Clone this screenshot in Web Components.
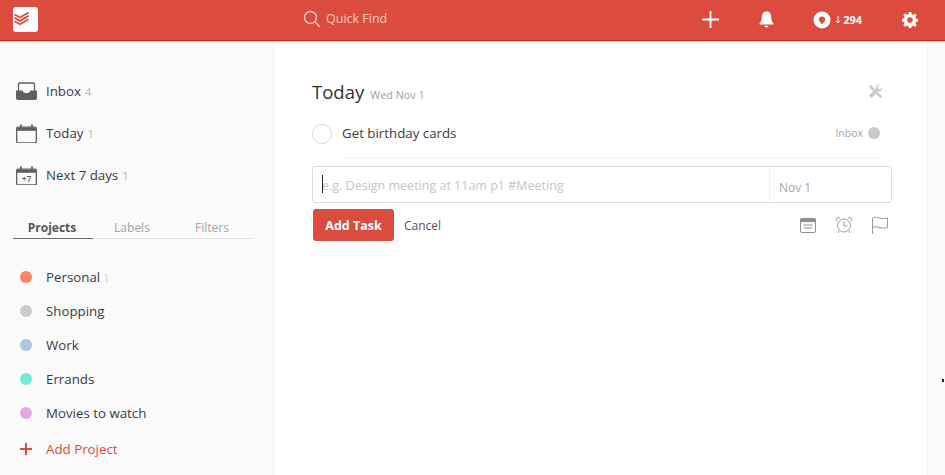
<!DOCTYPE html>
<html>
<head>
<meta charset="utf-8">
<title>Today</title>
<style>
  html, body { margin: 0; height: 100%; overflow: hidden; }
  body { font-family: "Open Sans", "Noto Sans", sans-serif; color: #333; }
  td-app { width: 945px; height: 475px; }
</style>
</head>
<body>
<td-app>
  <td-topbar slot="top"></td-topbar>
  <td-sidebar slot="side">
    <td-nav icon="inbox" count="4">Inbox</td-nav>
    <td-nav icon="today" count="1">Today</td-nav>
    <td-nav icon="week" count="1">Next 7 days</td-nav>
    <td-tabs></td-tabs>
    <td-project color="#ff8167" count="1">Personal</td-project>
    <td-project color="#cccccc">Shopping</td-project>
    <td-project color="#a8c8e4">Work</td-project>
    <td-project color="#74e8d4">Errands</td-project>
    <td-project color="#e3a8e4">Movies to watch</td-project>
    <td-add-project></td-add-project>
  </td-sidebar>
  <td-main slot="main">
    <td-task project="Inbox">Get birthday cards</td-task>
    <td-editor></td-editor>
  </td-main>
</td-app>

<script>
class TdApp extends HTMLElement {
  constructor() {
    super();
    this.attachShadow({ mode: 'open' }).innerHTML = `
      <style>
        :host { display: grid; grid-template-rows: 41px 1fr; grid-template-columns: 274px 1fr 18px; background: #fff; }
        ::slotted([slot=top]) { grid-column: 1 / 4; }
        .right { background: #fafafa; border-left: 1px solid #f1f1f1; position: relative; }
        .mark { position: absolute; right: 1px; top: 338px; width: 2px; height: 3px; background: #223; }
      </style>
      <slot name="top"></slot>
      <slot name="side"></slot>
      <slot name="main"></slot>
      <div class="right"><div class="mark"></div></div>`;
  }
}

class TdTopbar extends HTMLElement {
  constructor() {
    super();
    this.attachShadow({ mode: 'open' }).innerHTML = `
      <style>
        :host { display: flex; align-items: center; height: 40px; background: #db4c3f; border-bottom: 1px solid #c9260f; box-shadow: 0 1px 3px rgba(0,0,0,.08); color: #fff; position: relative; z-index: 1; }
        svg { display: block; flex: none; }
        .logo { margin-left: 13px; margin-bottom: 1px; }
        .search { display: flex; align-items: center; gap: 5px; margin-left: 265px; color: #f7c9c4; font-size: 12.500px; line-height: 18px; margin-bottom: 2px; }
        .right { display: flex; align-items: center; margin-left: auto; margin-bottom: 1px; }
        .plus { margin-right: 40px; }
        .bell { margin-right: 39px; }
        .karma { display: flex; align-items: center; margin-right: 40px; font-size: 11px; font-weight: 700; }
        .karma .arrow { margin: 0 2px 0 4px; }
        .gear { margin-right: 27px; }
      </style>
      <svg class="logo" width="25" height="25" viewBox="0 0 25 25">
        <rect width="25" height="25" rx="3" fill="#fff"/>
        <path d="M1.500 7.500 7 10.500 15.500 5.500M1.500 10.900 7 13.900 15.500 8.900M1.500 14.300 7 17.300 15.500 12.300" fill="none" stroke="#db4c3f" stroke-width="1.800"/>
      </svg>
      <div class="search">
        <svg width="18" height="18" viewBox="0 0 18 18" fill="none" stroke="#f7c9c4" stroke-width="1.400"><circle cx="7.500" cy="7.500" r="6"/><path d="M11.800 11.800 L17 17"/></svg>
        <span>Quick Find</span>
      </div>
      <div class="right">
        <svg class="plus" width="17" height="17" viewBox="0 0 17 17"><path d="M8.500 0v17M0 8.500h17" stroke="#fff" stroke-width="1.800"/></svg>
        <svg class="bell" width="15" height="17" viewBox="0 0 15 17" fill="#fff"><path d="M7.500 0.500c3.400 0 4.700 2.600 4.700 5.600 0 3.400 1 5 2.300 6.400v1h-14v-1c1.300-1.400 2.300-3 2.300-6.400 0-3 1.300-5.600 4.700-5.600z"/><path d="M5.500 14.800h4c0 1-.9 1.700-2 1.700s-2-.7-2-1.700z"/></svg>
        <div class="karma">
          <svg width="18" height="18" viewBox="0 0 18 18"><circle cx="9" cy="9" r="8.500" fill="#fff"/><path d="M9 5.500c2 0 3.200 1.200 3.200 2.800 0 1.800-1.800 3.300-3.200 5-1.400-1.700-3.200-3.200-3.200-5C5.800 6.700 7 5.500 9 5.500z" fill="#db4c3f"/></svg>
          <svg class="arrow" width="6" height="8" viewBox="0 0 6 8" fill="none" stroke="#fff"><path d="M3 0v7M.8 4.800 3 7l2.200-2.200"/></svg>
          <span>294</span>
        </div>
        <svg class="gear" width="16" height="16" viewBox="0 0 16 16"><path fill="#fff" fill-rule="evenodd" d="M6.700 0h2.600l.4 2.200 1.300.6 1.900-1.300 1.800 1.800-1.300 1.900.6 1.300 2 .4v2.600l-2 .4-.6 1.300 1.300 1.900-1.800 1.800-1.900-1.300-1.300.6-.4 2H6.700l-.4-2-1.300-.6-1.900 1.300-1.800-1.800 1.300-1.900-.6-1.300-2-.4V6.700l2-.4.6-1.300L1.300 3.100l1.800-1.800L5 2.800l1.300-.6zM8 5.200a2.800 2.800 0 1 0 0 5.600 2.800 2.800 0 0 0 0-5.600z"/></svg>
      </div>`;
  }
}

class TdSidebar extends HTMLElement {
  constructor() {
    super();
    this.attachShadow({ mode: 'open' }).innerHTML = `
      <style>
        :host { display: flex; flex-direction: column; background: #fafafa; border-right: 1px solid #f1f1f1; padding-top: 29px; height: 434px; box-sizing: border-box; overflow: hidden; }
      </style>
      <slot></slot>`;
  }
}

const NAV_ICONS = {
  inbox: `<path d="M2.500 10V2a1 1 0 0 1 1-1h14a1 1 0 0 1 1 1v8" fill="none" stroke="#5f5f5f" stroke-width="1.300"/><path d="M0 9h6.500c.5 1.800 2 2.800 4 2.800s3.500-1 4-2.800H21v7.500a2 2 0 0 1-2 2H2a2 2 0 0 1-2-2z" transform="translate(0 -.5)" fill="#5f5f5f"/>`,
  today: `<rect x=".7" y="3.200" width="19.600" height="15.600" rx="1.300" fill="none" stroke="#5f5f5f" stroke-width="1.300"/><path d="M.7 3.500h19.600v3.300H.7z" fill="#5f5f5f"/><path d="M5 .5v3M16 .5v3" stroke="#5f5f5f" stroke-width="1.800"/>`,
  week: `<rect x=".7" y="3.200" width="19.600" height="15.600" rx="1.300" fill="none" stroke="#5f5f5f" stroke-width="1.300"/><path d="M.7 3.500h19.600v3.300H.7z" fill="#5f5f5f"/><path d="M5 .5v3M16 .5v3" stroke="#5f5f5f" stroke-width="1.800"/><text x="10.500" y="16" text-anchor="middle" font-family="Open Sans, sans-serif" font-size="8.500" font-weight="600" fill="#5f5f5f">+7</text>`
};

class TdNav extends HTMLElement {
  constructor() {
    super();
    const count = this.getAttribute('count');
    this.attachShadow({ mode: 'open' }).innerHTML = `
      <style>
        :host { display: flex; align-items: center; height: 42px; padding-left: 16px; font-size: 13.300px; color: #3c3c3c; }
        svg { display: block; margin-right: 9px; }
        .count { margin-left: 4px; font-size: 11px; color: #b5b5b5; }
      </style>
      <svg width="21" height="19" viewBox="0 0 21 19">${NAV_ICONS[this.getAttribute('icon')]}</svg>
      <slot></slot><span class="count">${count}</span>`;
  }
}

class TdTabs extends HTMLElement {
  constructor() {
    super();
    this.attachShadow({ mode: 'open' }).innerHTML = `
      <style>
        :host { display: grid; grid-template-columns: repeat(3, 80px); margin: 20px 0 21px 13px; width: 240px; font-size: 12px; color: #a6a6a6; border-bottom: 1px solid #e0e0e0; text-align: center; }
        div { height: 23px; line-height: 24px; padding-right: 2px; box-sizing: border-box; margin-bottom: -1px; }
        .on { color: #555; font-weight: 700; border-bottom: 1px solid #6a6a6a; }
      </style>
      <div class="on">Projects</div><div>Labels</div><div>Filters</div>`;
  }
}

class TdProject extends HTMLElement {
  constructor() {
    super();
    const count = this.getAttribute('count');
    const color = this.getAttribute('color');
    this.attachShadow({ mode: 'open' }).innerHTML = `
      <style>
        :host { display: flex; align-items: center; height: 34px; padding-left: 20px; font-size: 13.300px; color: #3c3c3c; }
        i { width: 12px; height: 12px; border-radius: 50%; margin-right: 14px; background: ${color}; }
        .count { margin-left: 3px; font-size: 11px; color: #cfcfcf; }
      </style>
      <i></i><slot></slot>${count ? `<span class="count">${count}</span>` : ''}`;
  }
}

class TdAddProject extends HTMLElement {
  constructor() {
    super();
    this.attachShadow({ mode: 'open' }).innerHTML = `
      <style>
        :host { display: flex; align-items: center; height: 38px; padding-left: 20px; font-size: 13.300px; color: #db4c3f; }
        svg { display: block; margin-right: 14px; }
      </style>
      <svg width="12" height="12" viewBox="0 0 12 12"><path d="M6 0v12M0 6h12" stroke="#db4c3f" stroke-width="2"/></svg>
      <span>Add Project</span>`;
  }
}

class TdMain extends HTMLElement {
  constructor() {
    super();
    this.attachShadow({ mode: 'open' }).innerHTML = `
      <style>
        :host { display: block; padding: 36px 35px 0 38px; background: #fff; }
        .head { display: flex; align-items: center; height: 30px; padding-right: 9px; }
        h1 { margin: 0; font-size: 18.500px; font-weight: 400; color: #333; line-height: 28px; }
        small { margin: 5px 0 0 6px; font-size: 10.800px; color: #a0a0a0; }
        svg { margin-left: auto; display: block; margin-bottom: 1px; }
      </style>
      <div class="head">
        <h1>Today</h1><small>Wed Nov 1</small>
        <svg width="15" height="15" viewBox="0 0 15 15" fill="#c9c9c9" stroke="none">
          <path d="M1 2.500 2.500 1 5 2.500 6 5 14 12l-.5 1.500-1.500.5L5.500 7 2.500 5z"/>
          <path d="M14.700 3.300a3.800 3.800 0 0 1-4.700 3.900L3.500 14 1 11.600 7.800 5A3.800 3.800 0 0 1 11.700.3L9.600 2.600l.6 2.200 2.300.6z"/>
        </svg>
      </div>
      <slot></slot>`;
  }
}

class TdTask extends HTMLElement {
  constructor() {
    super();
    this.attachShadow({ mode: 'open' }).innerHTML = `
      <style>
        :host { display: flex; align-items: flex-start; height: 51px; box-sizing: border-box; font-size: 13.300px; color: #3c3c3c; }
        .check { width: 18px; height: 18px; border: 1px solid #d8d8d8; border-radius: 50%; flex: none; margin: 17px 10px 0 0; }
        .body { flex: 1; display: flex; align-items: center; height: 51px; margin-right: 12px; padding-top: 2px; box-sizing: border-box; border-bottom: 1px solid #efefef; }
        .proj { margin-left: auto; display: flex; align-items: center; gap: 5px; font-size: 10.500px; color: #a5a5a5; }
        .proj i { width: 12px; height: 12px; border-radius: 50%; background: #c9c9c9; }
      </style>
      <div class="check"></div>
      <div class="body"><slot></slot><div class="proj">${this.getAttribute('project')}<i></i></div></div>`;
  }
}

class TdEditor extends HTMLElement {
  constructor() {
    super();
    this.attachShadow({ mode: 'open' }).innerHTML = `
      <style>
        :host { display: block; margin-top: 8px; }
        .box { display: flex; height: 37px; box-sizing: border-box; border: 1px solid #dcdcdc; border-radius: 3px; font-size: 12.500px; }
        .input { flex: 1; display: flex; align-items: center; padding: 1px 0 0 9px; color: #c6c6c6; position: relative; }
        .caret { position: absolute; left: 9px; top: 8px; width: 1px; height: 18px; background: #222; }
        .date { width: 122px; margin: 1px 0; padding: 5px 0 0 9px; box-sizing: border-box; border-left: 1px solid #eee; color: #a8a8a8; font-size: 12px; display: flex; align-items: center; }
        .actions { display: flex; align-items: center; margin: 6px 0 0 1px; }
        button { width: 81px; height: 32px; padding: 0; border: 0; border-radius: 3px; background: #db4c3f; color: #fff; font: 700 12.500px "Open Sans", "Noto Sans", sans-serif; }
        .cancel { margin-left: 10px; font-size: 12px; color: #555; }
        .icons { margin-left: auto; margin-right: 4px; display: flex; align-items: center; gap: 19px; }
        svg { display: block; }
      </style>
      <div class="box">
        <div class="input"><span class="caret"></span><span>e.g. Design meeting at 11am p1 #Meeting</span></div>
        <div class="date">Nov 1</div>
      </div>
      <div class="actions">
        <button>Add Task</button><span class="cancel">Cancel</span>
        <div class="icons">
          <svg width="16" height="15" viewBox="0 0 16 15" fill="none" stroke="#8e8e8e"><rect x=".5" y=".5" width="15" height="14" rx="1.500"/><path d="M.5 1h15v2.500H.5z" fill="#8e8e8e"/><path d="M3.500 7h9M3.500 10h9"/></svg>
          <svg width="18" height="18" viewBox="0 0 18 18" fill="none" stroke="#9a9a9a"><circle cx="9" cy="9.500" r="6.500"/><path d="M9 5.500v4.500h3.500M1 5C1 2.500 3 1 5 1.500M17 5C17 2.500 15 1 13 1.500M4.500 14.500 3 17M13.500 14.500 15 17"/></svg>
          <svg width="16" height="18" viewBox="0 0 16 18" fill="none" stroke="#9a9a9a"><path d="M.5 18V2c3-1.300 5-.5 7.500.2 3 .7 5 .5 7.500-.2v9.500c-3 .8-5 .8-7.500.2-3-.7-5-1.400-7.500-.2"/></svg>
        </div>
      </div>`;
  }
}

customElements.define('td-app', TdApp);
customElements.define('td-topbar', TdTopbar);
customElements.define('td-sidebar', TdSidebar);
customElements.define('td-nav', TdNav);
customElements.define('td-tabs', TdTabs);
customElements.define('td-project', TdProject);
customElements.define('td-add-project', TdAddProject);
customElements.define('td-main', TdMain);
customElements.define('td-task', TdTask);
customElements.define('td-editor', TdEditor);
</script>
</body>
</html>
